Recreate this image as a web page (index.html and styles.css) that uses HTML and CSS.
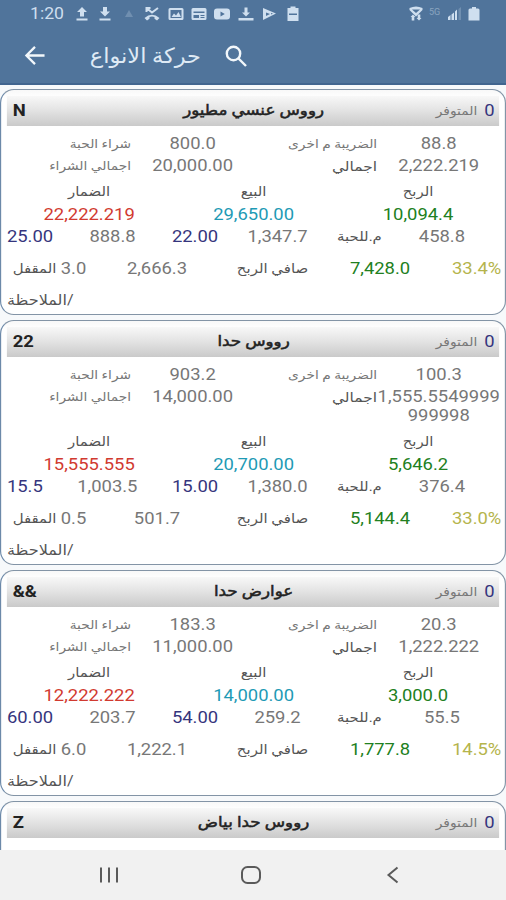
FILE: index.html
```html
<!DOCTYPE html>
<html lang="ar">

<head>
    <title>حركة الانواع</title>
    <meta charset="UTF-8" />
    <meta name="viewport" content="width=device-width, initial-scale=1.0" />
    <link rel="stylesheet" href="styles.css">
</head>

<body>
    <header class="top">
        <div class="status">
            <span class="clock">1:20</span>
            <div class="notifications">
                <svg viewBox="0 0 16 16"><path d="M8 1L13 6H10V10.500H6V6H3zM2.500 12.500H13.500V14.500H2.500z" /></svg>
                <svg viewBox="0 0 16 16"><path d="M8 10.500L13 5.500H10V1H6V5.500H3zM2.500 12.500H13.500V14.500H2.500z" /></svg>
                <svg class="faint" viewBox="0 0 16 16"><path d="M8 4L12 11H4z" /></svg>
                <svg viewBox="0 0 16 16"><path class="line" d="M2.500 2L8 6.500L14 2M2.500 6V2H6.500" /><path d="M.5 12Q8 5.500 15.500 12L13 14.500L10.500 12.800V11Q8 10.200 5.500 11V12.800L3 14.500z" /></svg>
                <svg viewBox="0 0 16 16"><path fill-rule="evenodd" d="M2 2H14Q15.500 2 15.500 3.500V12.500Q15.500 14 14 14H2Q.5 14 .5 12.500V3.500Q.5 2 2 2zM2.500 4V12H13.500V4zM3.500 11L6 7.500L8 9.500L10.500 6L13 11z" /></svg>
                <svg viewBox="0 0 16 16"><path fill-rule="evenodd" d="M2 2H14Q15.500 2 15.500 3.500V12.500Q15.500 14 14 14H2Q.5 14 .5 12.500V3.500Q.5 2 2 2zM2.500 5.500V7H13.500V5.500zM2.500 9V12H8V9zM9.500 9V10H13.500V9zM9.500 11V12H13.500V11z" /></svg>
                <svg viewBox="0 0 16 16"><path fill-rule="evenodd" d="M3 2.500H13Q16 2.500 16 5.500V10.500Q16 13.500 13 13.500H3Q0 13.500 0 10.500V5.500Q0 2.500 3 2.500zM6.500 5.500V10.500L10.800 8z" /></svg>
                <svg viewBox="0 0 16 16"><path d="M8 10.500L12 6.500H9.500V1.500H6.500V6.500H4zM.5 12H15.500V14.500H.5z" /></svg>
                <svg viewBox="0 0 16 16"><path fill-rule="evenodd" d="M2 2L15 7.500L2 14zM5 6.500L9 8L5 10zM10 7L12 7.600L10 8.500z" /></svg>
                <svg viewBox="0 0 16 16"><path fill-rule="evenodd" d="M5.500 .5H10.500V2H13.500V15H2.500V2H5.500zM4 7.500V9H12V7.500z" /></svg>
            </div>
            <div class="signals">
                <svg viewBox="0 0 16 16"><path fill-rule="evenodd" d="M1.500 2Q8 -1 14.500 2V4L8 10.500L1.500 4zM4 3.500H12L8 7z" /><path d="M2.500 11L5 8.500L7.500 11H6.300V14.500H3.700V11zM8.500 12H9.700V8.500H12.300V12H13.500L11 14.500z" /></svg>
                <span class="network">5G</span>
                <svg viewBox="0 0 16 16"><path d="M1 14V11L3.500 9V14zM4.500 14V8.500L7 6.500V14zM8 14V5.500L10 3.500V14z" /><path class="faint" d="M11.500 14V3L14 1V14z" /></svg>
                <svg class="battery" viewBox="0 0 12 16"><path d="M4 1H8V2.500H10Q11.500 2.500 11.500 4V14.500H.5V4Q.5 2.500 2 2.500H4z" /></svg>
            </div>
        </div>
        <div class="app-bar">
            <svg class="back" viewBox="0 0 22 22"><path d="M21 11H2M11 2L2 11L11 20" /></svg>
            <h1 class="title">حركة الانواع</h1>
            <svg class="search" viewBox="0 0 24 24"><circle cx="9.500" cy="9.500" r="6.700" /><path d="M14.500 14.500L22 22" /></svg>
        </div>
    </header>

    <main class="viewport">
        <div class="list">
            <section class="card">
                <div class="card-head">
                    <b class="code">N</b>
                    <h2 class="name">رووس عنسي مطيور</h2>
                    <span class="stock"><span>المتوفر</span><span class="navy">0</span></span>
                </div>
                <div class="quarters">
                    <span class="label">شراء الحبة</span><span>800.0</span>
                    <span class="label">الضريبة م اخرى</span><span>88.8</span>
                    <span class="label">اجمالي الشراء</span><span>20,000.00</span>
                    <span class="label dark large">اجمالي</span><span class="total">2,222.219</span>
                </div>
                <div class="thirds">
                    <span class="dark">الضمار</span><span class="dark">البيع</span><span class="dark">الربح</span>
                    <span class="red">22,222.219</span><span class="blue">29,650.00</span><span class="green">10,094.4</span>
                </div>
                <div class="pairs">
                    <div><span class="navy">25.00</span><span>888.8</span></div>
                    <div><span class="navy">22.00</span><span>1,347.7</span></div>
                    <div><span class="dark">م.للحبة</span><span>458.8</span></div>
                </div>
                <div class="net">
                    <span class="closed"><span class="dark">المقفل</span><span>3.0</span></span>
                    <span>2,666.3</span>
                    <span class="dark net-label">صافي الربح</span>
                    <span class="green">7,428.0</span>
                    <span class="percent">33.4%</span>
                </div>
                <div class="note">الملاحظة/</div>
            </section>

            <section class="card">
                <div class="card-head">
                    <b class="code">22</b>
                    <h2 class="name">رووس حدا</h2>
                    <span class="stock"><span>المتوفر</span><span class="navy">0</span></span>
                </div>
                <div class="quarters">
                    <span class="label">شراء الحبة</span><span>903.2</span>
                    <span class="label">الضريبة م اخرى</span><span>100.3</span>
                    <span class="label">اجمالي الشراء</span><span>14,000.00</span>
                    <span class="label dark large">اجمالي</span><span class="total">1,555.5549999<br>999998</span>
                </div>
                <div class="thirds">
                    <span class="dark">الضمار</span><span class="dark">البيع</span><span class="dark">الربح</span>
                    <span class="red">15,555.555</span><span class="blue">20,700.00</span><span class="green">5,646.2</span>
                </div>
                <div class="pairs">
                    <div><span class="navy">15.5</span><span>1,003.5</span></div>
                    <div><span class="navy">15.00</span><span>1,380.0</span></div>
                    <div><span class="dark">م.للحبة</span><span>376.4</span></div>
                </div>
                <div class="net">
                    <span class="closed"><span class="dark">المقفل</span><span>0.5</span></span>
                    <span>501.7</span>
                    <span class="dark net-label">صافي الربح</span>
                    <span class="green">5,144.4</span>
                    <span class="percent">33.0%</span>
                </div>
                <div class="note">الملاحظة/</div>
            </section>

            <section class="card">
                <div class="card-head">
                    <b class="code">&amp;&amp;</b>
                    <h2 class="name">عوارض حدا</h2>
                    <span class="stock"><span>المتوفر</span><span class="navy">0</span></span>
                </div>
                <div class="quarters">
                    <span class="label">شراء الحبة</span><span>183.3</span>
                    <span class="label">الضريبة م اخرى</span><span>20.3</span>
                    <span class="label">اجمالي الشراء</span><span>11,000.00</span>
                    <span class="label dark large">اجمالي</span><span class="total">1,222.222</span>
                </div>
                <div class="thirds">
                    <span class="dark">الضمار</span><span class="dark">البيع</span><span class="dark">الربح</span>
                    <span class="red">12,222.222</span><span class="blue">14,000.00</span><span class="green">3,000.0</span>
                </div>
                <div class="pairs">
                    <div><span class="navy">60.00</span><span>203.7</span></div>
                    <div><span class="navy">54.00</span><span>259.2</span></div>
                    <div><span class="dark">م.للحبة</span><span>55.5</span></div>
                </div>
                <div class="net">
                    <span class="closed"><span class="dark">المقفل</span><span>6.0</span></span>
                    <span>1,222.1</span>
                    <span class="dark net-label">صافي الربح</span>
                    <span class="green">1,777.8</span>
                    <span class="percent">14.5%</span>
                </div>
                <div class="note">الملاحظة/</div>
            </section>

            <section class="card">
                <div class="card-head">
                    <b class="code">Z</b>
                    <h2 class="name">رووس حدا بياض</h2>
                    <span class="stock"><span>المتوفر</span><span class="navy">0</span></span>
                </div>
            </section>
        </div>
    </main>

    <nav class="nav-bar">
        <svg viewBox="0 0 22 20"><path d="M3 2.500V17.500M11 2.500V17.500M19 2.500V17.500" /></svg>
        <svg viewBox="0 0 22 20"><rect x="2" y="2" width="18" height="16" rx="5.500" /></svg>
        <svg viewBox="0 0 22 20"><path d="M15.500 2.500L6.500 10L15.500 17.500" /></svg>
    </nav>
</body>

</html>
```
FILE: styles.css
```css
* {
    box-sizing: border-box;
}

body {
    margin: 0;
    height: 900px;
    display: flex;
    flex-direction: column;
    overflow: hidden;
    font: 16px/22px Roboto, 'DejaVu Sans', sans-serif;
    color: #777;
    background-color: #fff;
}

h1,
h2 {
    margin: 0;
}

/* header */
.top {
    height: 85px;
    flex: none;
    background-color: #50749b;
    border-bottom: 2px solid #41658f;
    color: #dfeaf5;
}

.status {
    height: 28px;
    display: flex;
    align-items: center;
    padding: 0 26px 0 30px;
}

.status svg {
    width: 16px;
    height: 16px;
    fill: #cfdfef;
}

.clock {
    width: 44px;
    color: #cfdfef;
    transform: scaleX(1.1);
    transform-origin: left;
}

.notifications {
    display: flex;
    gap: 7.4px;
}

.status .line {
    fill: none;
    stroke: #cfdfef;
    stroke-width: 2;
}

.status .faint {
    opacity: 0.25;
}

.signals {
    margin-left: auto;
    display: flex;
    align-items: center;
    gap: 5px;
}

.network {
    width: 13px;
    font-size: 9px;
    line-height: 12px;
    padding-bottom: 4px;
    opacity: 0.4;
}

.status .battery {
    width: 12px;
}

.app-bar {
    height: 55px;
    display: flex;
    align-items: center;
    padding-left: 24px;
}

.app-bar svg {
    fill: none;
    stroke: #f2f7fb;
    stroke-width: 2.4;
}

.back {
    width: 22px;
    height: 21px;
}

.title {
    width: 155px;
    font-size: 21px;
    font-weight: 400;
    text-align: right;
    transform: scaleX(1.07);
    transform-origin: right;
}

.search {
    width: 26px;
    height: 24px;
    margin-left: 22px;
}

/* list, text is wider than tall */
.viewport {
    flex: 1;
    overflow: hidden;
    background-color: #f7f9fb;
}

.list {
    width: 440px;
    padding-top: 4px;
    display: flex;
    flex-direction: column;
    gap: 5px;
    transform: scaleX(1.15);
    transform-origin: left top;
}

.card {
    min-height: 226px;
    padding: 6px 5px 3px;
    border: 1.5px solid #8394a6;
    border-left-color: #6c89a9;
    border-radius: 12px / 14px;
    background: linear-gradient(#f8f8f8, #fff 8px);
}

.card-head {
    height: 30px;
    display: grid;
    grid-template-columns: 80px 1fr 80px;
    align-items: center;
    padding: 0 4px 0 5px;
    background: linear-gradient(#f8f8f8, #e2e2e2 50%, #cacaca);
}

.code,
.name {
    color: #222;
    font-size: 16px;
    font-weight: 700;
}

.name {
    font-size: 14.5px;
    font-weight: 400;
    text-align: center;
    -webkit-text-stroke: 0.5px #222;
}

.stock {
    display: flex;
    justify-content: flex-end;
    gap: 6px;
    font-size: 12px;
}

.stock .navy {
    font-size: 16px;
}

.quarters {
    display: grid;
    grid-template-columns: repeat(4, 107px);
    padding: 7px 0 0 1px;
    text-align: center;
}

.quarters .label {
    font-size: 12px;
    text-align: right;
}

.quarters .large {
    font-size: 13.5px;
}

.total {
    padding: 1px 0 2px;
    line-height: 19px;
}

.thirds {
    display: grid;
    grid-template-columns: repeat(3, 143px);
    padding-top: 3px;
    line-height: 23px;
    text-align: center;
}

.pairs {
    display: grid;
    grid-template-columns: repeat(3, 143.5px);
}

.pairs div {
    display: flex;
}

.pairs div span:last-child {
    flex: 1;
    text-align: center;
}

.net {
    display: grid;
    grid-template-columns: 70px 121px 71px 125px 1fr;
    padding: 10px 1.5px 0 0;
    text-align: center;
}

.closed {
    display: flex;
    justify-content: space-between;
    padding: 0 1px 0 5px;
}

.net-label,
.percent {
    text-align: right;
}

.note {
    padding-top: 9px;
    color: #555;
    font-size: 14px;
}

.dark {
    color: #555;
    font-size: 13px;
}

.navy {
    color: #35357d;
}

.red {
    color: #d13a30;
}

.blue {
    color: #1e9ab5;
}

.green {
    color: #218021;
}

.percent {
    color: #b5b44c;
}

/* system navigation */
.nav-bar {
    height: 50px;
    flex: none;
    display: flex;
    justify-content: space-between;
    align-items: center;
    padding: 0 102px 0 98px;
    background-color: #f1f1f1;
}

.nav-bar svg {
    width: 22px;
    height: 20px;
    fill: none;
    stroke: #5a5a5a;
    stroke-width: 2;
}
```
